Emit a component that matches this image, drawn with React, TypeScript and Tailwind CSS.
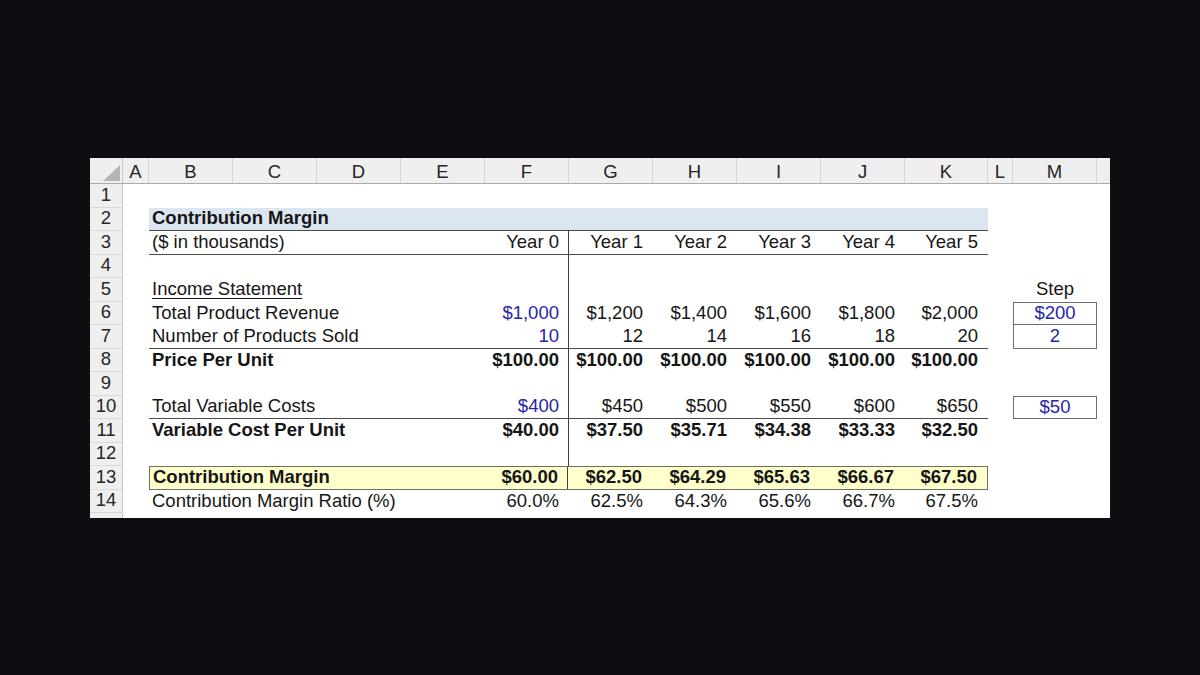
import type { ReactNode } from 'react';

const GRID =
  'grid grid-cols-[33px_26px_84px_84px_84px_84px_84px_84px_84px_84px_84px_83px_25px_84px_13px]';

const LETTERS = ['A', 'B', 'C', 'D', 'E', 'F', 'G', 'H', 'I', 'J', 'K', 'L', 'M'];

const BLUE = 'text-[#2626a6]';

function HeaderRow() {
  return (
    <div className={`${GRID} h-[26px] bg-[#efefef] border-b border-[#ababab] text-[#262626]`}>
      <div className="relative border-r border-[#c8c8c8]">
        <svg className="absolute right-[2px] bottom-[2px]" width="17" height="16" viewBox="0 0 17 16">
          <polygon points="17,0 17,16 0,16" fill="#b4b4b4" />
        </svg>
      </div>
      {LETTERS.map((l) => (
        <div key={l} className="flex items-center justify-center pt-[5px] border-r border-[#d4d4d4]">
          {l}
        </div>
      ))}
      <div />
    </div>
  );
}

function RowNum({ n }: { n: number }) {
  return (
    <div className="flex items-center justify-center bg-[#efefef] border-r border-[#c8c8c8] border-b border-b-[#d9d9d9] text-[#262626]">
      {n}
    </div>
  );
}

type RowProps = {
  n: number;
  tall: boolean;
  label?: ReactNode;
  vals?: string[];
  bold?: boolean;
  blue?: boolean;
  wrap?: string;
  divider?: boolean;
  m?: ReactNode;
  mBox?: string;
};

function Row({ n, tall, label, vals, bold, blue, wrap, divider, m, mBox }: RowProps) {
  const cells = [0, 1, 2, 3, 4, 5];
  return (
    <div className={`${GRID} ${tall ? 'h-[24px]' : 'h-[23px]'}`}>
      <RowNum n={n} />
      <div />
      <div className={`col-span-10 flex ${wrap ?? ''}`}>
        <div className={`flex-1 min-w-0 flex items-center pl-[3px] whitespace-nowrap ${bold ? 'font-bold' : ''}`}>
          {label}
        </div>
        {cells.map((i) => (
          <div
            key={i}
            className={`${i === 5 ? 'w-[83px]' : 'w-[84px]'} flex items-center justify-end whitespace-nowrap ${
              i === 0 && divider ? 'border-r border-[#404040] pr-[9px]' : 'pr-[10px]'
            } ${i === 0 && blue ? BLUE : ''} ${bold ? 'font-bold' : ''}`}
          >
            {vals?.[i]}
          </div>
        ))}
      </div>
      <div />
      <div className={`flex items-center justify-center ${mBox ?? ''}`}>{m}</div>
      <div />
    </div>
  );
}

const LINE = 'border-b border-[#4a4a4a]';

export default function App() {
  return (
    <div className="min-h-screen bg-[#0d0e12] flex items-center justify-center">
      <div className="w-[1020px] bg-white text-[18.5px] leading-none text-[#161616] font-['Liberation_Sans',Arial,sans-serif]">
        <HeaderRow />
        <Row n={1} tall />
        <Row n={2} tall={false} label="Contribution Margin" bold wrap={`bg-[#dce6f1] ${LINE}`} />
        <Row
          n={3}
          tall
          label="($ in thousands)"
          vals={['Year 0', 'Year 1', 'Year 2', 'Year 3', 'Year 4', 'Year 5']}
          wrap={LINE}
          divider
        />
        <Row n={4} tall={false} divider />
        <Row
          n={5}
          tall
          label={<span className="underline underline-offset-[3px] decoration-1">Income Statement</span>}
          divider
          m="Step"
        />
        <Row
          n={6}
          tall={false}
          label="Total Product Revenue"
          vals={['$1,000', '$1,200', '$1,400', '$1,600', '$1,800', '$2,000']}
          blue
          divider
          m="$200"
          mBox={`border border-[#6e6e6e] ${BLUE}`}
        />
        <Row
          n={7}
          tall
          label="Number of Products Sold"
          vals={['10', '12', '14', '16', '18', '20']}
          blue
          divider
          wrap={LINE}
          m="2"
          mBox={`border-x border-b border-[#6e6e6e] ${BLUE}`}
        />
        <Row
          n={8}
          tall={false}
          label="Price Per Unit"
          vals={['$100.00', '$100.00', '$100.00', '$100.00', '$100.00', '$100.00']}
          bold
          divider
        />
        <Row n={9} tall divider />
        <Row
          n={10}
          tall={false}
          label="Total Variable Costs"
          vals={['$400', '$450', '$500', '$550', '$600', '$650']}
          blue
          divider
          wrap={LINE}
          m="$50"
          mBox={`border border-[#6e6e6e] ${BLUE}`}
        />
        <Row
          n={11}
          tall
          label="Variable Cost Per Unit"
          vals={['$40.00', '$37.50', '$35.71', '$34.38', '$33.33', '$32.50']}
          bold
          divider
        />
        <Row n={12} tall={false} divider />
        <Row
          n={13}
          tall
          label="Contribution Margin"
          vals={['$60.00', '$62.50', '$64.29', '$65.63', '$66.67', '$67.50']}
          bold
          divider
          wrap="bg-[#ffffcc] border border-[#6f6f62]"
        />
        <Row
          n={14}
          tall={false}
          label="Contribution Margin Ratio (%)"
          vals={['60.0%', '62.5%', '64.3%', '65.6%', '66.7%', '67.5%']}
        />
        <div className={`${GRID} h-[5px]`}>
          <div className="bg-[#efefef] border-r border-[#c8c8c8]" />
        </div>
      </div>
    </div>
  );
}
